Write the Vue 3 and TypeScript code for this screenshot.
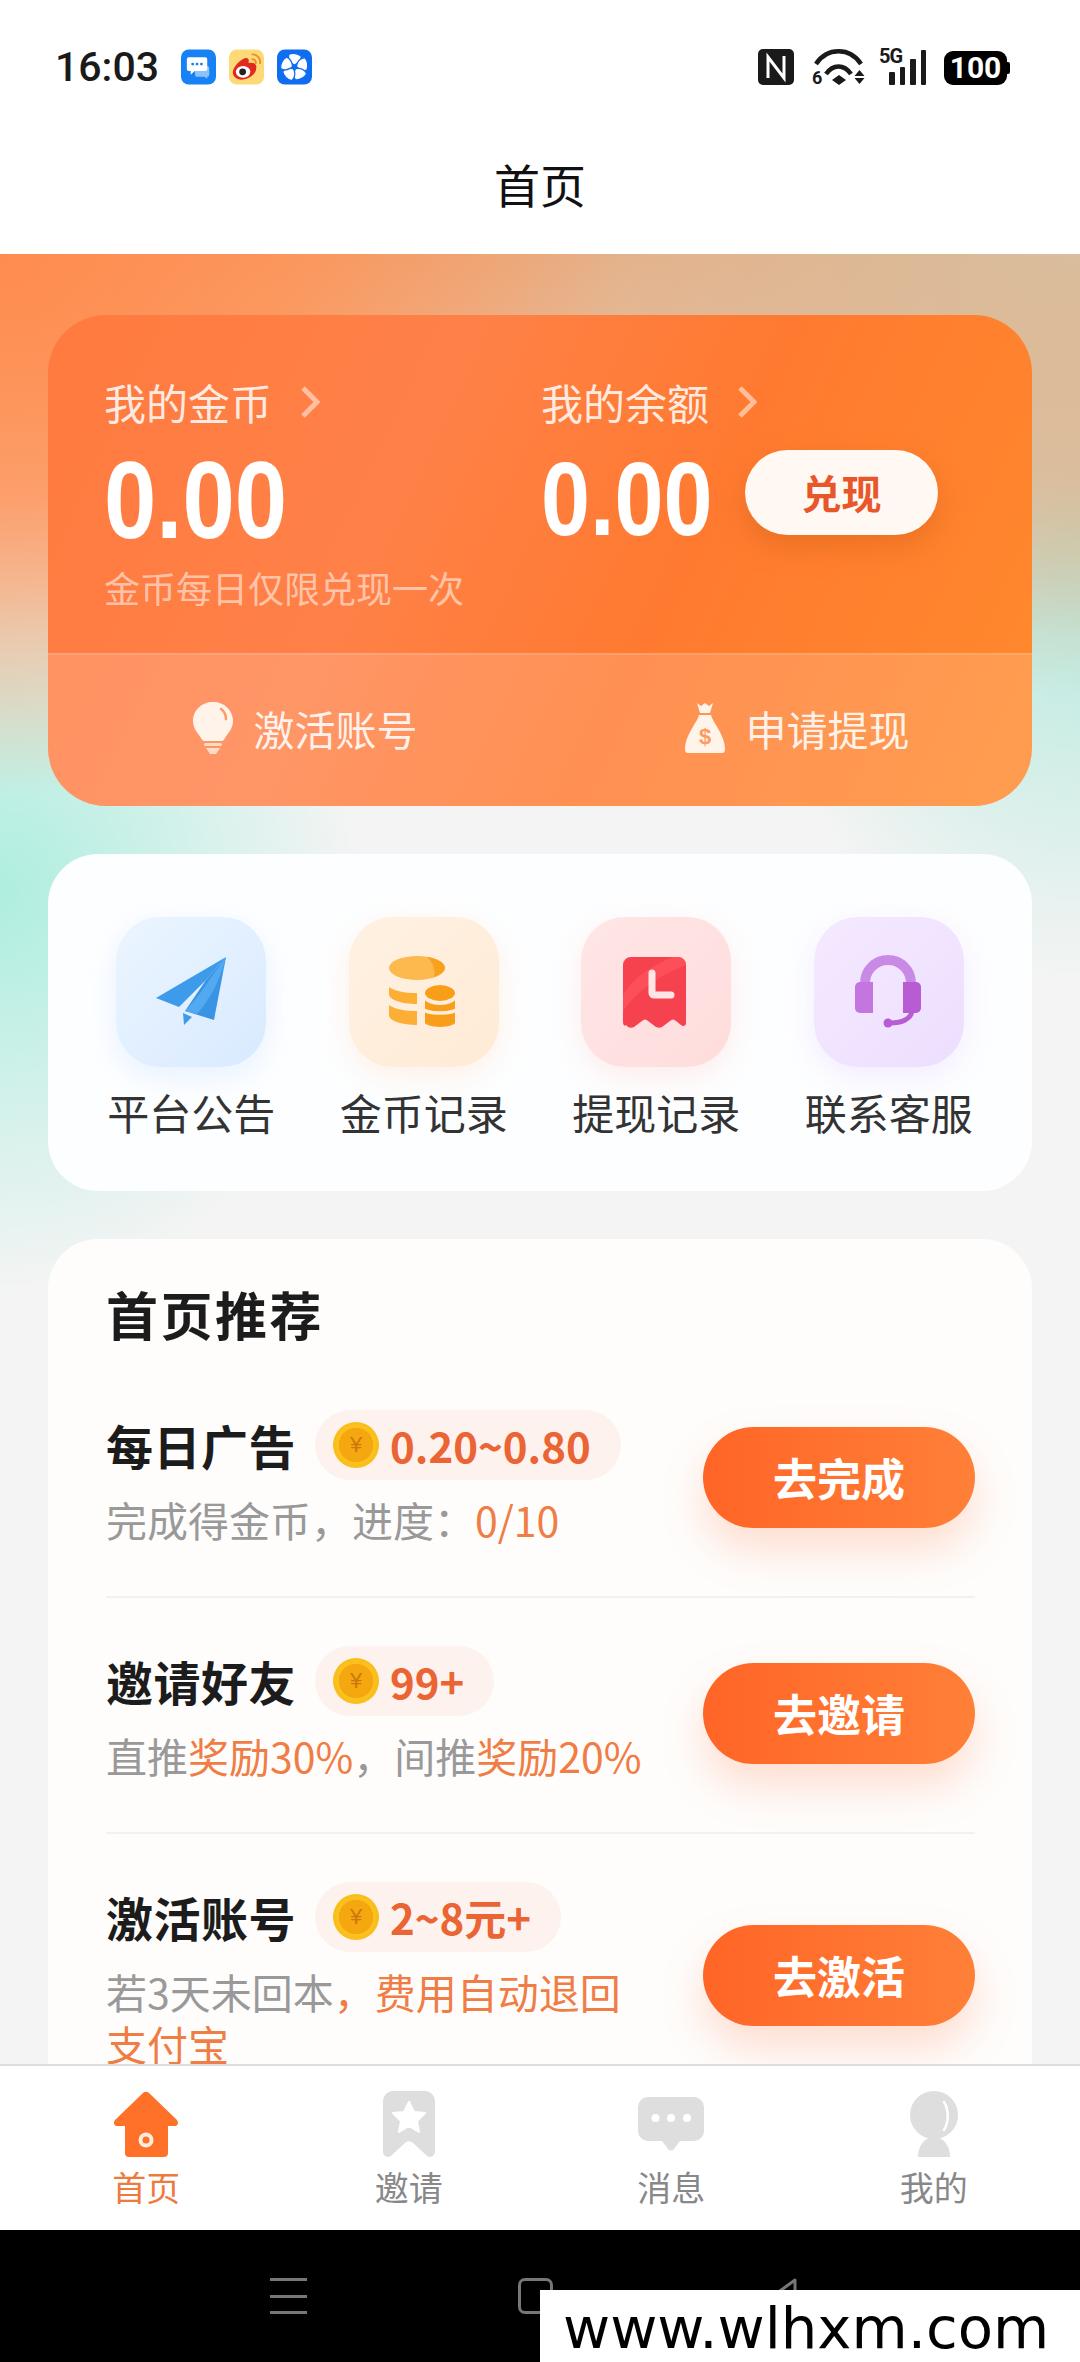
<script setup lang="ts">
interface Task {
  title: string
  reward: string
  action: string
}

const menus = [
  { key: 'plane', label: '平台公告' },
  { key: 'coins', label: '金币记录' },
  { key: 'ticket', label: '提现记录' },
  { key: 'headset', label: '联系客服' },
]

const tasks: Task[] = [
  { title: '每日广告', reward: '0.20~0.80', action: '去完成' },
  { title: '邀请好友', reward: '99+', action: '去邀请' },
  { title: '激活账号', reward: '2~8元+', action: '去激活' },
]

const tabs = [
  { key: 'home', label: '首页' },
  { key: 'invite', label: '邀请' },
  { key: 'message', label: '消息' },
  { key: 'mine', label: '我的' },
]

// 风车图标的叶片角度
const blades = [0, 72, 144, 216, 288]
</script>

<template>
  <div class="phone">
    <div class="status-bar">
      <div class="status-left">
        <span class="time">16:03</span>
        <svg class="app-icon" viewBox="0 0 36 36">
          <rect width="36" height="36" rx="8" fill="#1682f5" />
          <path d="M13 17h14a2 2 0 0 1 2 2v7a2 2 0 0 1-2 2v2l-3-2H15z" fill="#8cc2fa" />
          <path d="M8 8h17a2 2 0 0 1 2 2v10a2 2 0 0 1-2 2H14l-4 4v-4H8a2 2 0 0 1-2-2V10a2 2 0 0 1 2-2z" fill="#fff" />
          <circle cx="12" cy="15" r="1.5" fill="#1682f5" />
          <circle cx="16.500" cy="15" r="1.5" fill="#1682f5" />
          <circle cx="21" cy="15" r="1.5" fill="#1682f5" />
        </svg>
        <svg class="app-icon" viewBox="0 0 36 36">
          <rect width="36" height="36" rx="8" fill="#fdd978" />
          <path d="M4 24c0-6 7-13 12-15 4-1 5 1 4 5 5-1 9 1 8 5 0 6-7 12-15 12-5 0-9-3-9-7z" fill="#e2291f" />
          <ellipse cx="14.500" cy="23" rx="7.500" ry="6" fill="#fff" />
          <circle cx="14" cy="23" r="3.500" fill="#222" />
          <path d="M24 5a8 8 0 0 1 8 9M24 10a3.500 3.500 0 0 1 3.500 4" fill="none" stroke="#e8932a" stroke-width="2" stroke-linecap="round" />
        </svg>
        <svg class="app-icon" viewBox="0 0 36 36">
          <rect width="36" height="36" rx="8" fill="#0f6ef0" />
          <g fill="#fff" stroke="#0f6ef0" stroke-width="1.300">
            <path
              v-for="angle in blades"
              :key="angle"
              d="M18 16C14 14 11 11 12 5 16 3 22 4 25 7 25 11 22 14 18 16z"
              :transform="`rotate(${angle} 18 18)`"
            />
          </g>
        </svg>
      </div>
      <div class="status-right">
        <svg class="nfc" viewBox="0 0 36 36">
          <rect width="36" height="36" rx="5" fill="#1a1a1a" />
          <path d="M10 29V8l16 21V7" fill="none" stroke="#fff" stroke-width="3" />
        </svg>
        <div class="wifi">
          <svg viewBox="0 0 53 36">
            <path d="M4 15C15 -2 38 -2 49 15" fill="none" stroke="#1a1a1a" stroke-width="4.500" />
            <path d="M14 25C21 15 32 15 39 25" fill="none" stroke="#1a1a1a" stroke-width="4.500" />
            <path d="M27 26l7 5-7 5-7-5z" fill="#1a1a1a" />
            <path d="M47.500 21l5 6h-10zM42.500 29h10l-5 6z" fill="#1a1a1a" />
          </svg>
          <span>6</span>
        </div>
        <div class="signal">
          <span class="five-g">5G</span>
          <i style="height: 13px"></i>
          <i style="height: 18px"></i>
          <i style="height: 26px"></i>
          <i style="height: 35px"></i>
        </div>
        <div class="battery"><span>100</span></div>
      </div>
    </div>

    <div class="nav-title">首页</div>

    <main class="content">
      <section class="wallet">
        <div class="wallet-top">
          <div class="coin-col">
            <div class="wallet-label">我的金币
              <svg viewBox="0 0 20 32"><path d="M3 2l14 14L3 30" /></svg>
            </div>
            <div class="coin-amount">0.00</div>
            <div class="wallet-tip">金币每日仅限兑现一次</div>
          </div>
          <div class="balance-col">
            <div class="wallet-label">我的余额
              <svg viewBox="0 0 20 32"><path d="M3 2l14 14L3 30" /></svg>
            </div>
            <div class="balance-row">
              <div class="balance-amount">0.00</div>
              <div class="exchange-btn">兑现</div>
            </div>
          </div>
        </div>
        <div class="wallet-bottom">
          <div class="wallet-link">
            <svg class="bulb" viewBox="0 0 40 52">
              <path d="M20 0c11 0 20 8 20 19 0 8-5 12-8 17-1 2-2 3-3 3H11c-1 0-2-1-3-3-3-5-8-9-8-17C0 8 9 0 20 0z" fill="#fff3ea" />
              <path d="M28 7c4 3 5 6 5 10" fill="none" stroke="#ff9a62" stroke-width="2.500" stroke-linecap="round" />
              <rect x="11" y="41" width="18" height="3" rx="1.500" fill="#ffdcc4" />
              <path d="M13 46h14l-4 6h-6z" fill="#ffdcc4" />
            </svg>
            <span>激活账号</span>
          </div>
          <div class="wallet-link">
            <svg class="bag" viewBox="0 0 40 50">
              <path d="M12 0l4 3 4-3 4 3 4-3-3 10h-10z" fill="#fff3ea" />
              <path d="M14 12h12c2 8 14 20 14 34 0 3-1 4-3 4H3c-2 0-3-1-3-4 0-14 12-26 14-34z" fill="#fff3ea" />
              <text x="20" y="41" text-anchor="middle" class="bag-sign">$</text>
            </svg>
            <span>申请提现</span>
          </div>
        </div>
      </section>

      <section class="menu-card">
        <div v-for="item in menus" :key="item.key" class="menu-item">
          <div class="menu-tile" :class="'tile-' + item.key">
            <svg v-if="item.key === 'plane'" viewBox="0 0 150 150">
              <path d="M110 40L40 81l23 9 27-27z" fill="#3d9be9" />
              <path d="M110 40L90 63 69 94l29 9z" fill="#3a94e6" />
              <path d="M110 40L94 62c-8 12-15 22-25 32l12 3c12-14 22-30 29-57z" fill="#52a9ef" />
              <path d="M67 96l9 4-8 8z" fill="#3d9be9" />
            </svg>
            <svg v-else-if="item.key === 'coins'" viewBox="0 0 150 150">
              <path d="M40 70c6 4 15 6 28 6v11c-15 0-28-4-28-10zM40 88c6 4 15 6 28 6v14c-15 0-28-4-28-10z" fill="#fdae35" />
              <ellipse cx="68" cy="51" rx="28" ry="12" fill="#fdb84e" />
              <path d="M78 39.800c10 2 18 6 18 11 0 4-5 7-11 9 2-6-1-15-7-20z" fill="#f8a11d" />
              <g fill="#f99e18" stroke="#ffeedd" stroke-width="4">
                <path d="M74 76v30c0 3 7 6 17 6s17-3 17-6V76z" />
                <ellipse cx="91" cy="76" rx="17" ry="10" />
              </g>
              <path d="M72 91c4 4 11 5 19 5s15-1 19-5" fill="none" stroke="#ffeedd" stroke-width="3.500" />
            </svg>
            <svg v-else-if="item.key === 'ticket'" viewBox="0 0 150 150">
              <path d="M42 48a8 8 0 0 1 8-8h47a8 8 0 0 1 8 8v58c0 3-3 4-5 2l-5-4c-2-2-4-2-6 0l-8 6c-2 1-4 1-6 0l-8-6c-2-2-4-2-6 0l-8 6c-2 1-4 1-6 0l-2-2c-2 2-3-1-3-3z" fill="#f6424f" />
              <path d="M42 78c12-20 32-30 50-38h5a8 8 0 0 1 8 8c-20 8-44 20-63 46z" fill="#ff5560" opacity=".7" />
              <path d="M71 56v20a2 2 0 0 0 2 2h17" fill="none" stroke="#ffe6e6" stroke-width="7" stroke-linecap="round" />
            </svg>
            <svg v-else viewBox="0 0 150 150">
              <path d="M51 68V66a23 23 0 0 1 46 0v2" fill="none" stroke="#c98ae6" stroke-width="10" />
              <path d="M46 65h13v31H46a5 5 0 0 1-5-5V70a5 5 0 0 1 5-5z" fill="#c575e0" />
              <path d="M89 65h13a5 5 0 0 1 5 5v21a5 5 0 0 1-5 5H89z" fill="#b85cd3" />
              <path d="M98 94c-1 8-10 12-22 12" fill="none" stroke="#b85cd3" stroke-width="5" stroke-linecap="round" />
              <circle cx="74" cy="106" r="4.500" fill="#b85cd3" />
            </svg>
          </div>
          <div class="menu-label">{{ item.label }}</div>
        </div>
      </section>

      <section class="task-card">
        <h2 class="task-heading">首页推荐</h2>
        <div v-for="(task, index) in tasks" :key="task.title" class="task-row">
          <div class="task-info">
            <div class="task-head">
              <span class="task-title">{{ task.title }}</span>
              <span class="reward-chip">
                <span class="coin">¥</span>
                <span class="reward-text">{{ task.reward }}</span>
              </span>
            </div>
            <p v-if="index === 0" class="task-desc">完成得金币，进度：<em>0/10</em></p>
            <p v-else-if="index === 1" class="task-desc">直推<em>奖励30%</em>，间推<em>奖励20%</em></p>
            <p v-else class="task-desc">若3天未回本<em>，费用自动退回支付宝</em></p>
          </div>
          <div class="task-btn">{{ task.action }}</div>
        </div>
      </section>
    </main>

    <footer class="tab-bar">
      <div v-for="(tab, index) in tabs" :key="tab.key" class="tab" :class="{ active: index === 0 }">
        <svg v-if="tab.key === 'home'" viewBox="0 0 66 66">
          <path d="M30 2a4 4 0 0 1 6 0l28 27c2 3 1 6-3 6h-6v27a4 4 0 0 1-4 4H16a4 4 0 0 1-4-4V35H5c-4 0-5-3-3-6z" fill="#ff7029" />
          <circle cx="33" cy="49" r="7.500" fill="#ffeedd" />
          <circle cx="33" cy="49" r="3.500" fill="#ff7029" />
        </svg>
        <svg v-else-if="tab.key === 'invite'" viewBox="0 0 66 66">
          <path d="M17 0h32a10 10 0 0 1 10 10v50c0 6-6 8-10 3L36 51c-2-1-4-1-6 0L17 63c-4 5-10 3-10-3V10A10 10 0 0 1 17 0z" fill="#dedede" />
          <path d="M33 11l5 10 11 1-8 8 2 11-10-6-10 6 2-11-8-8 11-1z" fill="#fff" stroke="#fff" stroke-width="2" stroke-linejoin="round" />
        </svg>
        <svg v-else-if="tab.key === 'message'" viewBox="0 0 66 66">
          <path d="M10 6h46a10 10 0 0 1 10 10v24a10 10 0 0 1-10 10H42l-6 8c-2 2-4 2-6 0l-6-8H10A10 10 0 0 1 0 40V16A10 10 0 0 1 10 6z" fill="#dedede" />
          <circle cx="17.500" cy="27" r="4" fill="#fff" />
          <circle cx="33" cy="27" r="4" fill="#fff" />
          <circle cx="49" cy="27" r="4" fill="#fff" />
        </svg>
        <svg v-else viewBox="0 0 66 66">
          <circle cx="33" cy="24" r="24" fill="#dedede" />
          <path d="M17 66c0-12 7-20 16-20s16 8 16 20z" fill="#dedede" />
          <path d="M43 11c5 8 5 20 0 28" fill="none" stroke="#fff" stroke-width="2.500" stroke-linecap="round" />
        </svg>
        <span>{{ tab.label }}</span>
      </div>
    </footer>

    <div class="system-nav">
      <div class="nav-menu"><i></i><i></i><i></i></div>
      <div class="nav-home"></div>
      <svg class="nav-back" viewBox="0 0 28 36"><path d="M25 2L3 18l22 16z" /></svg>
    </div>

    <div class="watermark">www.wlhxm.com</div>
  </div>
</template>

<style scoped>
.phone {
  position: relative;
  display: flex;
  flex-direction: column;
  width: 1080px;
  height: 2362px;
  overflow: hidden;
  background: #fff;
  font-family: "Noto Sans CJK SC", "Noto Sans", sans-serif;
}

.status-bar {
  display: flex;
  justify-content: space-between;
  flex: none;
  box-sizing: border-box;
  height: 118px;
  padding: 49px 73px 0 55px;
}

.status-left,
.status-right {
  display: flex;
  align-items: flex-start;
}

.time {
  width: 126px;
  font-family: Roboto, sans-serif;
  font-size: 41px;
  font-weight: 500;
  line-height: 36px;
  color: #1a1a1a;
}

.app-icon {
  width: 35px;
  height: 36px;
  margin-right: 13px;
}

.nfc {
  width: 36px;
  height: 36px;
  margin-right: 18px;
}

.wifi {
  position: relative;
  width: 53px;
  height: 36px;
  margin-right: 14px;
}

.wifi svg {
  display: block;
  width: 53px;
  height: 36px;
}

.wifi span {
  position: absolute;
  left: 0;
  bottom: -2px;
  font-family: Roboto, sans-serif;
  font-size: 18px;
  font-weight: 700;
  line-height: 18px;
  color: #1a1a1a;
}

.signal {
  position: relative;
  display: flex;
  align-items: flex-end;
  gap: 5px;
  box-sizing: border-box;
  width: 48px;
  height: 36px;
  padding-left: 10px;
  margin-right: 17px;
}

.signal i {
  display: block;
  width: 5.500px;
  background: #1a1a1a;
  border-radius: 1px;
}

.five-g {
  position: absolute;
  left: 0;
  top: -2px;
  font-family: Roboto, sans-serif;
  font-size: 20px;
  font-weight: 700;
  line-height: 18px;
  letter-spacing: -1px;
  color: #1a1a1a;
}

.battery {
  position: relative;
  display: flex;
  align-items: center;
  justify-content: center;
  box-sizing: border-box;
  width: 63px;
  height: 34px;
  margin-top: 2px;
  background: #000;
  border-radius: 9px;
  font-family: Roboto, sans-serif;
  font-size: 30px;
  font-weight: 700;
  line-height: 34px;
  color: #fff;
}

.battery::after {
  content: "";
  position: absolute;
  right: -3px;
  top: 11px;
  width: 3px;
  height: 12px;
  background: #000;
  border-radius: 0 2px 2px 0;
}

.nav-title {
  flex: none;
  height: 136px;
  font-size: 46px;
  line-height: 130px;
  text-align: center;
  color: #111;
}

.content {
  flex: 1;
  min-height: 0;
  overflow: hidden;
  display: flex;
  flex-direction: column;
  gap: 48px;
  padding: 61px 48px 0;
  background:
    radial-gradient(620px 540px at 0 0, #ff8c4e 0%, rgba(255, 145, 85, 0.8) 45%, rgba(255, 150, 90, 0) 100%),
    radial-gradient(800px 440px at 100% 0, #d9bd9c 0%, rgba(222, 184, 150, 0.75) 50%, rgba(222, 184, 150, 0) 100%),
    linear-gradient(180deg, #eda878 0, rgba(237, 168, 120, 0) 380px),
    radial-gradient(360px 400px at 0 640px, #aeeee0 0%, rgba(174, 238, 224, 0) 100%),
    radial-gradient(340px 460px at 100% 270px, #aee8da 0%, rgba(174, 232, 218, 0) 100%),
    #f4f4f4;
}

.wallet {
  flex: none;
  display: flex;
  flex-direction: column;
  height: 491px;
  overflow: hidden;
  border-radius: 58px;
  background: linear-gradient(115deg, #ff7a3f 0%, #ff8148 35%, #ff7a30 62%, #ff8a2c 100%);
  color: #fff;
}

.wallet-top {
  flex: none;
  display: flex;
  box-sizing: border-box;
  height: 340px;
  padding: 57px 0 0 56px;
  border-bottom: 2px solid rgba(255, 255, 255, 0.28);
}

.coin-col {
  width: 437px;
}

.wallet-label {
  display: flex;
  align-items: center;
  height: 60px;
  font-size: 42px;
  line-height: 60px;
  color: rgba(255, 255, 255, 0.85);
}

.wallet-label svg {
  width: 20px;
  height: 32px;
  margin-left: 28px;
}

.wallet-label path {
  fill: none;
  stroke: rgba(255, 255, 255, 0.5);
  stroke-width: 5;
}

.coin-amount,
.balance-amount {
  font-family: "Liberation Sans", sans-serif;
  font-weight: 700;
  color: #fff;
  transform-origin: left center;
  transform: scaleX(0.855);
}

.coin-amount {
  margin-top: 13px;
  font-size: 110px;
  line-height: 110px;
}

.wallet-tip {
  margin-top: 7px;
  font-size: 36px;
  line-height: 50px;
  color: rgba(255, 255, 255, 0.55);
}

.balance-row {
  display: flex;
  align-items: flex-start;
  margin-top: 10px;
}

.balance-amount {
  width: 204px;
  margin-top: 3px;
  font-size: 103px;
  line-height: 110px;
}

.exchange-btn {
  width: 193px;
  height: 85px;
  margin-top: 8px;
  border-radius: 43px;
  background: #fff8f3;
  box-shadow: 0 12px 28px rgba(205, 95, 20, 0.4);
  font-size: 40px;
  font-weight: 700;
  line-height: 85px;
  text-align: center;
  color: #e8572a;
}

.wallet-bottom {
  flex: 1;
  display: flex;
  padding-bottom: 6px;
  background: rgba(255, 255, 255, 0.17);
}

.wallet-link {
  flex: 1;
  display: flex;
  align-items: center;
  justify-content: center;
  padding-left: 22px;
  font-size: 41px;
  color: rgba(255, 255, 255, 0.88);
}

.wallet-link svg {
  display: block;
  margin-right: 21px;
}

.bulb {
  width: 40px;
  height: 52px;
}

.bag {
  width: 40px;
  height: 50px;
}

.bag-sign {
  font-family: "Liberation Sans", sans-serif;
  font-size: 22px;
  font-weight: 700;
  fill: #ff9a5e;
}

.menu-card {
  flex: none;
  display: grid;
  grid-template-columns: repeat(4, 1fr);
  box-sizing: border-box;
  height: 337px;
  padding: 63px 27px 0;
  border-radius: 50px;
  background: #fdfeff;
}

.menu-item {
  display: flex;
  flex-direction: column;
  align-items: center;
}

.menu-tile {
  width: 150px;
  height: 150px;
  border-radius: 44px;
}

.menu-tile svg {
  display: block;
  width: 150px;
  height: 150px;
}

.tile-plane {
  background: linear-gradient(135deg, #ebf5ff, #d9eaff);
  box-shadow: 0 10px 30px rgba(150, 195, 255, 0.2);
}

.tile-coins {
  background: linear-gradient(135deg, #fff1e2, #ffebd6);
  box-shadow: 0 10px 30px rgba(255, 190, 140, 0.2);
}

.tile-ticket {
  background: linear-gradient(135deg, #ffe6e6, #ffdcdc);
  box-shadow: 0 10px 30px rgba(255, 170, 160, 0.2);
}

.tile-headset {
  background: linear-gradient(135deg, #f5e9ff, #ecdfff);
  box-shadow: 0 10px 30px rgba(200, 170, 255, 0.2);
}

.menu-label {
  margin-top: 15px;
  font-size: 42px;
  line-height: 60px;
  white-space: nowrap;
  color: #333;
}

.task-card {
  flex: none;
  padding: 41px 57px 0 58px;
  border-radius: 50px 50px 0 0;
  background: #fefdfc;
}

.task-heading {
  margin: 0;
  font-size: 52px;
  font-weight: 700;
  line-height: 68px;
  letter-spacing: 2.500px;
  color: #1c1c1c;
}

.task-row {
  display: flex;
  align-items: center;
  justify-content: space-between;
  padding: 48px 0 51px;
  border-bottom: 2px solid #f3f1f0;
}

.task-row:first-of-type {
  padding-top: 62px;
}

.task-info {
  width: 540px;
}

.task-head {
  display: flex;
  align-items: center;
}

.task-title {
  width: 209px;
  font-size: 47px;
  font-weight: 700;
  line-height: 70px;
  letter-spacing: 0.500px;
  color: #1c1c1c;
}

.reward-chip {
  display: flex;
  align-items: center;
  height: 70px;
  padding: 0 30px 0 18px;
  border-radius: 35px;
  background: #fdf2ed;
}

.coin {
  width: 46px;
  height: 46px;
  margin-right: 11px;
  border-radius: 50%;
  background: radial-gradient(circle, #f5a70f 0 52%, #fbc21f 54%, #f7b40e 100%);
  font-family: "Liberation Sans", sans-serif;
  font-size: 22px;
  line-height: 46px;
  text-align: center;
  color: #c9780c;
}

.reward-text {
  font-size: 42px;
  font-weight: 700;
  line-height: 70px;
  white-space: nowrap;
  color: #ea6434;
}

.task-desc {
  margin: 0;
  padding-top: 13px;
  font-size: 41px;
  line-height: 52px;
  color: #999;
}

.task-desc em {
  font-style: normal;
  color: #ef7d45;
}

.task-btn {
  flex: none;
  width: 272px;
  height: 101px;
  border-radius: 51px;
  background: linear-gradient(90deg, #ff6526, #ff8038);
  box-shadow: 0 22px 44px rgba(255, 110, 50, 0.22);
  font-size: 44px;
  font-weight: 700;
  line-height: 101px;
  text-align: center;
  color: #fff;
}

.tab-bar {
  flex: none;
  display: grid;
  grid-template-columns: repeat(4, 262.500px);
  box-sizing: border-box;
  height: 166px;
  padding: 25px 15px 0;
  border-top: 2px solid #ddd;
  background: #fff;
}

.tab {
  display: flex;
  flex-direction: column;
  align-items: center;
  font-size: 34px;
  line-height: 48px;
  color: #888;
}

.tab svg {
  display: block;
  width: 66px;
  height: 66px;
  margin-bottom: 6px;
}

.tab.active {
  color: #ee7a3e;
}

.system-nav {
  flex: none;
  display: flex;
  align-items: flex-start;
  box-sizing: border-box;
  height: 132px;
  padding: 48px 0 0 270px;
  background: #000;
}

.nav-menu {
  display: flex;
  flex-direction: column;
  justify-content: space-between;
  width: 37px;
  height: 36px;
  margin-right: 211px;
}

.nav-menu i {
  display: block;
  height: 3px;
  background: #777;
}

.nav-home {
  box-sizing: border-box;
  width: 35px;
  height: 36px;
  margin-right: 217px;
  border: 3px solid #777;
  border-radius: 7px;
}

.nav-back {
  width: 28px;
  height: 36px;
}

.nav-back path {
  fill: none;
  stroke: #777;
  stroke-width: 3;
  stroke-linejoin: round;
}

.watermark {
  position: absolute;
  right: 0;
  bottom: 0;
  box-sizing: border-box;
  width: 540px;
  height: 72px;
  padding-left: 23px;
  background: #fff;
  font-family: "DejaVu Sans", sans-serif;
  font-size: 57.700px;
  line-height: 76px;
  color: #000;
}
</style>
